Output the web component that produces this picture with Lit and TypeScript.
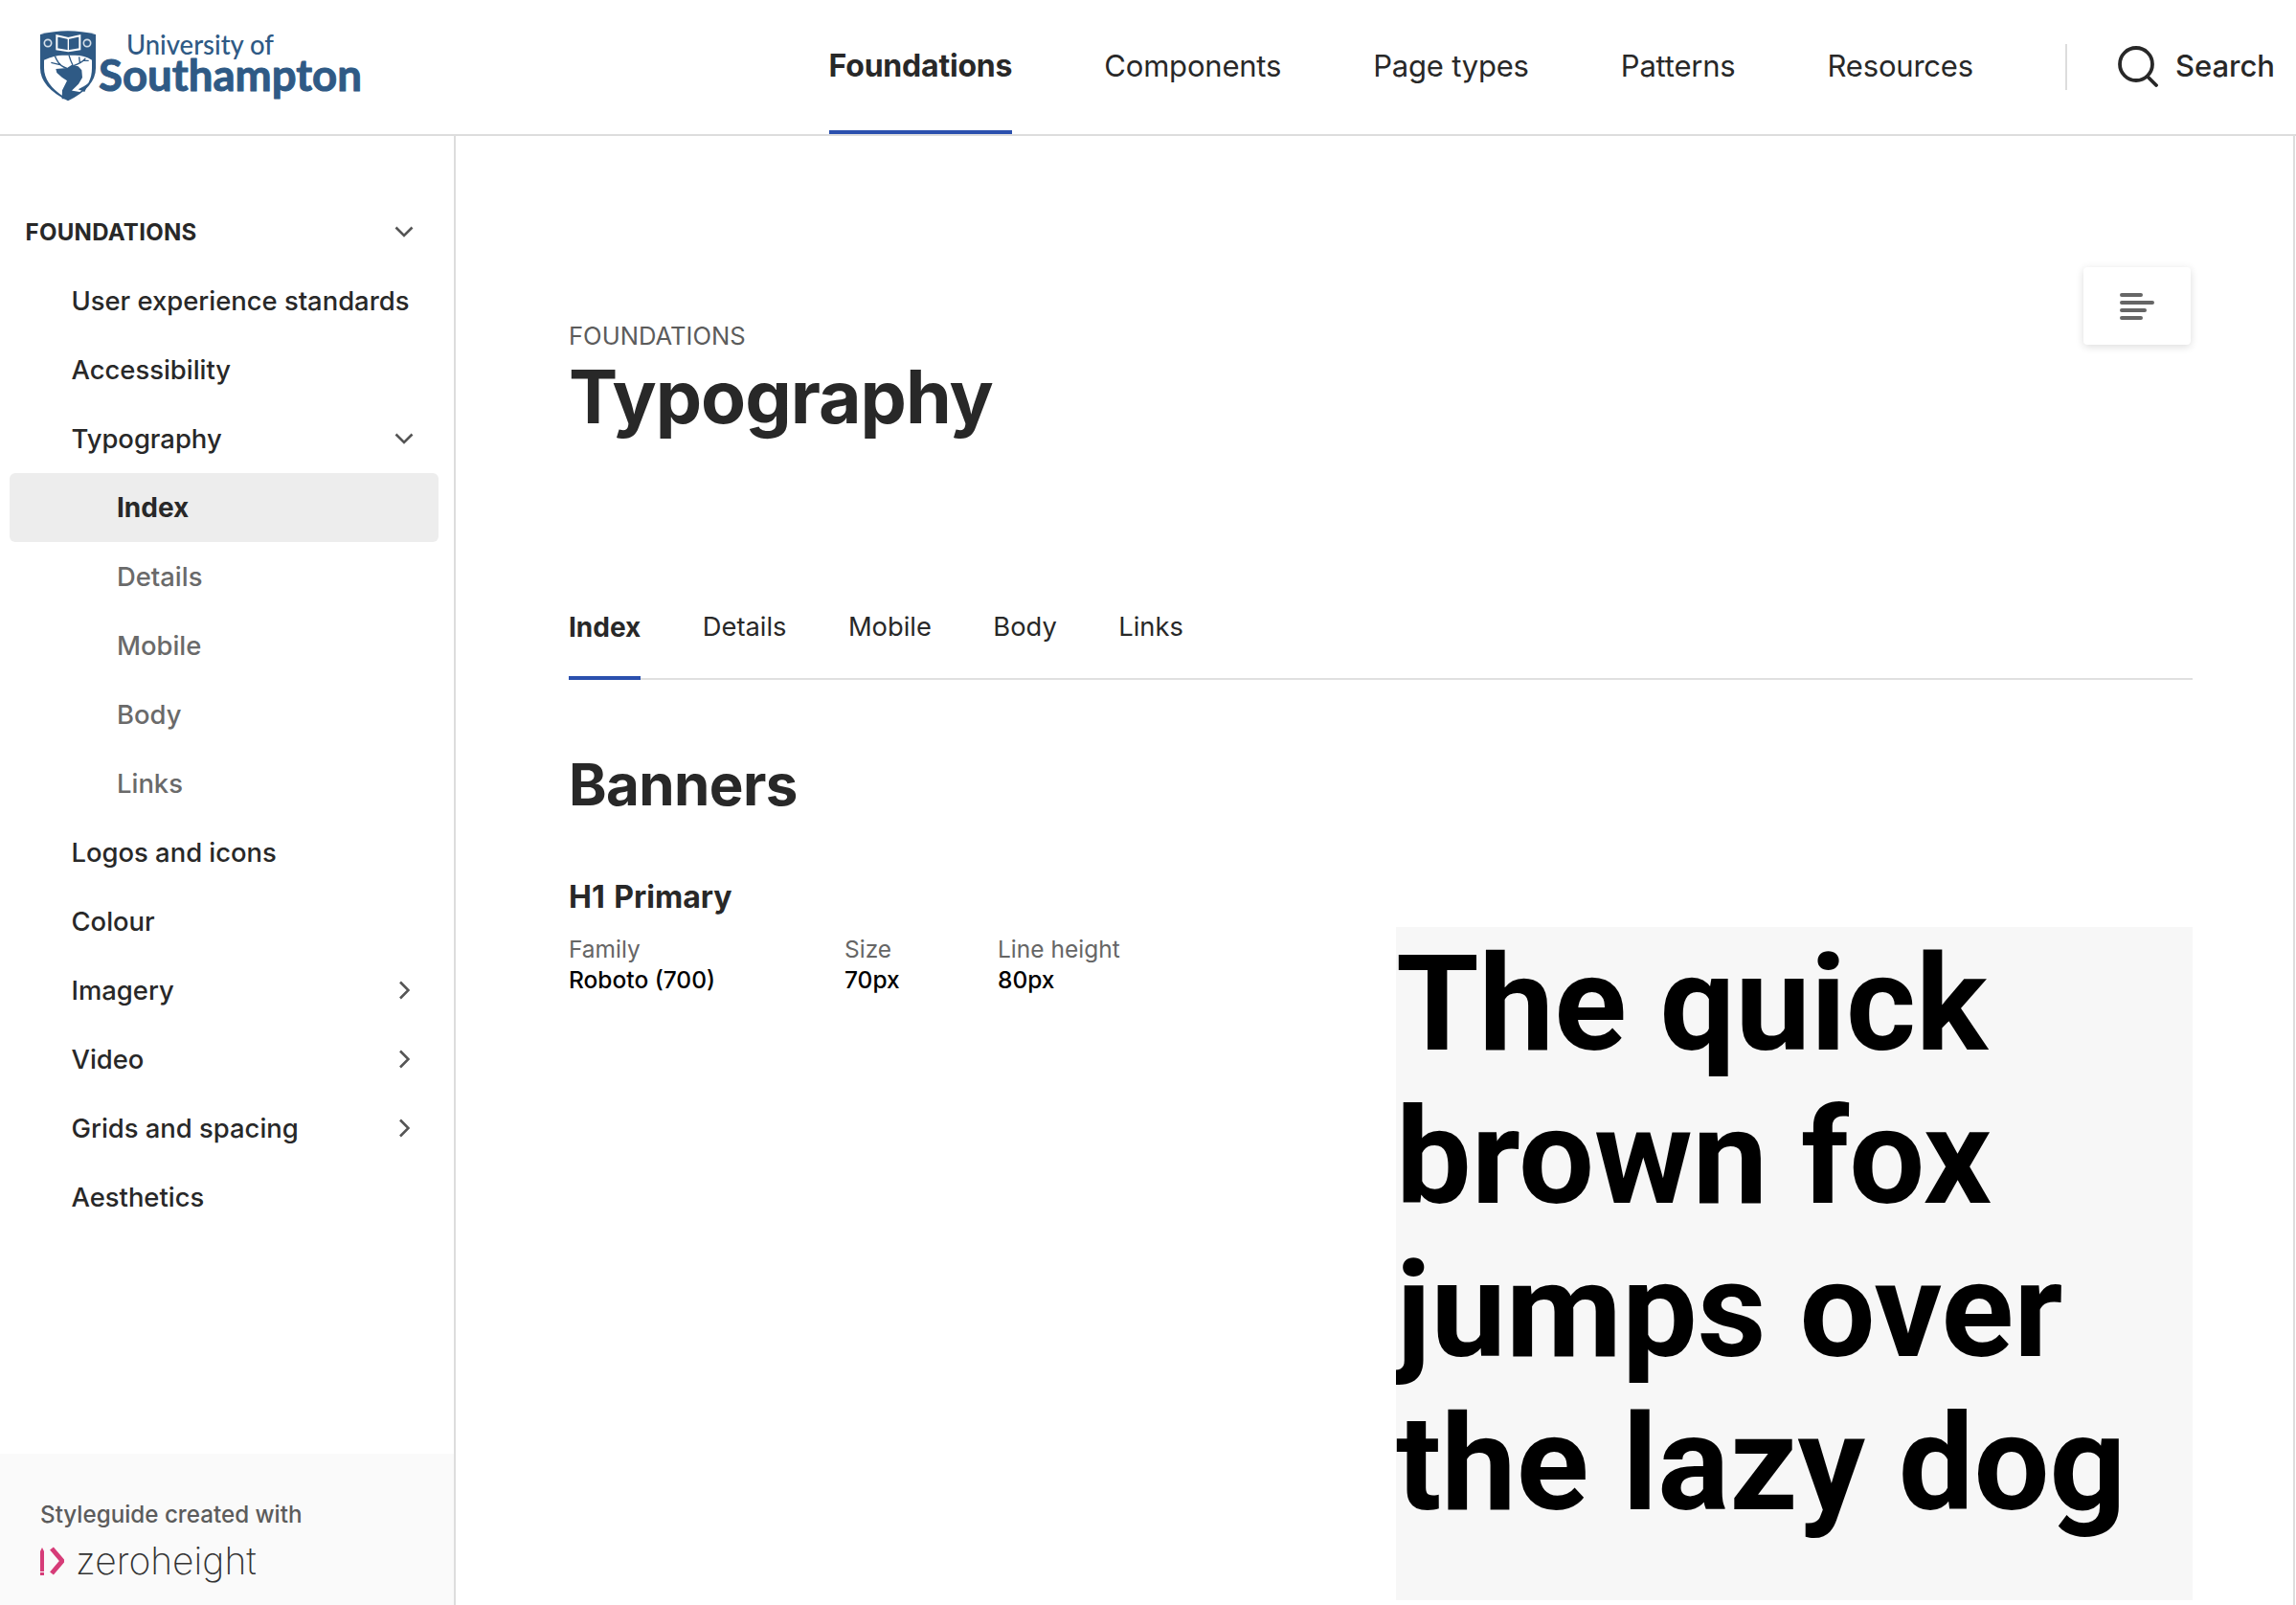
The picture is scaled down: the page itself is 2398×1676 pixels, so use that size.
import { LitElement, html, css, svg } from 'lit';
import { customElement } from 'lit/decorators.js';

const chevronDown = html`<svg class="chev" width="20" height="12" viewBox="0 0 20 12"><path d="M1.5 1.5 10 10l8.5-8.5" fill="none" stroke="#555" stroke-width="2.6"/></svg>`;
const chevronRight = html`<svg class="chev right" width="12" height="20" viewBox="0 0 12 20"><path d="M2 1.5 10.5 10 2 18.5" fill="none" stroke="#555" stroke-width="2.6"/></svg>`;

const shield = svg`
  <path d="M66 60Q152 38 240 60V165Q240 225 153 268Q66 225 66 165Z" fill="#2f5a85"/>
  <path d="M78 140Q112 125 135 125L175 125Q205 125 228 140V165Q228 215 190 240L158 235Q150 250 140 255Q78 215 78 165Z" fill="#fff"/>
  <path d="M118 64l36 8 36-8v42l-36 6-36-6z" fill="none" stroke="#fff" stroke-width="6"/>
  <path d="M154 72v38" stroke="#fff" stroke-width="4"/>
  <circle cx="90" cy="87" r="11" fill="none" stroke="#d5dfe9" stroke-width="5"/>
  <circle cx="213" cy="87" r="11" fill="none" stroke="#d5dfe9" stroke-width="5"/>
  <path d="M115 168L150 165L165 155L185 160L196 172L198 195L186 215L166 235L158 262L134 262L135 235L150 205L135 195L118 180Z" fill="#2f5a85"/>
  <path d="M150 166Q128 160 118 140M128 155L100 148M118 140L112 128M168 156Q160 140 156 125M170 158Q195 150 208 135M190 148L188 130M200 142L218 142" fill="none" stroke="#2f5a85" stroke-width="4"/>
  <path d="M185 232Q205 222 218 212L205 240Z" fill="#2f5a85"/>
`;

@customElement('app-root')
export class AppRoot extends LitElement {
  static styles = css`
    :host {
      display: flex;
      flex-direction: column;
      height: 100vh;
      overflow: hidden;
      background: #fff;
      font-family: Inter, 'Noto Sans', sans-serif;
      color: #282828;
    }

    header {
      display: flex;
      align-items: center;
      flex: none;
      height: 140px;
      border-bottom: 2px solid #ddd;
      padding: 0 22px 0 42px;
    }
    .logo { display: flex; flex: none; }
    .top-nav { display: flex; height: 100%; margin-left: auto; gap: 96px; }
    .top-nav a {
      display: flex;
      align-items: center;
      height: 134px;
      padding-top: 2px;
      border-bottom: 4px solid transparent;
      font-size: 31px;
      line-height: 40px;
      letter-spacing: -0.2px;
      white-space: nowrap;
    }
    .top-nav a.on { font-size: 32px; font-weight: 700; border-bottom-color: #2b50ae; }
    .divider { width: 2px; height: 48px; background: #ddd; margin: 0 53px 0 96px; }
    .search { display: flex; align-items: center; gap: 18px; font-size: 31px; font-weight: 500; line-height: 40px; padding-bottom: 2px; }

    .body { display: flex; flex: 1; min-height: 0; }

    aside {
      display: flex;
      flex-direction: column;
      flex: none;
      width: 474px;
      border-right: 2px solid #ddd;
    }
    .side-nav { flex: 1; padding-top: 64px; }
    .row {
      display: flex;
      align-items: center;
      justify-content: space-between;
      height: 72px;
      margin: 0 16px 0 10px;
      padding: 0 26px 0 64.5px;
      font-size: 27.4px;
      font-weight: 500;
      white-space: nowrap;
      border-radius: 6px;
    }
    .row.head { padding-left: 16.5px; font-size: 24px; font-weight: 700; letter-spacing: 0.3px; }
    .row.sub { padding-left: 112px; color: #6a6a6a; }
    .row.on { background: #ededed; color: #282828; font-size: 28px; font-weight: 700; }
    .chev { flex: none; }
    .chev.right { margin-right: 4px; }

    .made {
      height: 158px;
      flex: none;
      box-sizing: border-box;
      padding: 46px 0 0 42px;
      background: #fafafa;
    }
    .made p { margin: 0; font-size: 24.2px; line-height: 36px; font-weight: 500; color: #5c5c5c; }
    .zh { display: flex; align-items: center; gap: 12px; margin-top: 7px; height: 46px; }
    .zh span { font-weight: 200; font-size: 39px; line-height: 46px; color: #333; }

    main {
      flex: 1;
      min-width: 0;
      padding: 137px 105px 0 118px;
      margin-right: 1px;
      border-right: 2px solid #ddd;
      overflow: hidden;
    }
    .page-head { display: flex; justify-content: space-between; align-items: flex-start; }
    .page-title { padding-top: 56px; }
    .eyebrow { font-size: 25.6px; line-height: 32px; color: #5c5c5c; }
    h1 { margin: 3px 0 0; font-size: 76.8px; line-height: 90px; font-weight: 700; letter-spacing: -1px; }
    .toc {
      display: flex;
      align-items: center;
      justify-content: center;
      width: 112px;
      height: 81px;
      margin-right: 2px;
      border-radius: 4px;
      background: #fff;
      box-shadow: 0 2px 8px rgba(0, 0, 0, 0.14);
    }

    .tabs { display: flex; gap: 64.5px; margin-top: 174px; border-bottom: 2px solid #e0e0e0; }
    .tabs a { margin-bottom: -2px; padding: 1px 0 31px; border-bottom: 4px solid transparent; font-size: 27.3px; line-height: 40px; }
    .tabs a.on { font-size: 28px; font-weight: 700; border-bottom-color: #2b50ae; }

    h2 { margin: 71px 0 0; font-size: 60px; line-height: 76px; font-weight: 700; letter-spacing: -0.6px; }
    h3 { margin: 60px 0 0; font-size: 32px; line-height: 40px; font-weight: 700; word-spacing: 2px; }

    .spec { display: flex; margin-top: 11px; }
    .meta { display: flex; flex: none; width: 864px; padding-top: 7px; }
    .meta div { font-size: 24.5px; font-weight: 500; line-height: 32px; color: #000; }
    .meta div:nth-child(1) { width: 288px; }
    .meta div:nth-child(2) { width: 160px; }
    .meta b { display: block; font-weight: 400; color: #666; }
    .sample {
      flex: 1;
      padding-bottom: 63px;
      overflow: hidden;
      background: #f7f7f7;
      color: #000;
      font-family: Roboto, sans-serif;
      font-weight: 700;
      font-size: 140px;
      line-height: 160px;
    }
  `;

  render() {
    return html`
      <header>
        <div class="logo">
          <svg width="340" height="90" viewBox="42 23 340 90">
            <svg x="42" y="30" width="60" height="74" viewBox="66 48 180 222">${shield}</svg>
            <text x="132" y="55" font-family="Lato, sans-serif" font-size="29" font-weight="500" fill="#2f5a85" textLength="154" lengthAdjust="spacingAndGlyphs">University of</text>
            <text x="103" y="93" font-family="Lato, sans-serif" font-size="46" font-weight="700" fill="#2f5a85" stroke="#2f5a85" stroke-width="1" stroke-linejoin="round" textLength="275" lengthAdjust="spacingAndGlyphs">Southampton</text>
          </svg>
        </div>
        <nav class="top-nav">
          <a class="on">Foundations</a>
          <a>Components</a>
          <a>Page types</a>
          <a>Patterns</a>
          <a>Resources</a>
        </nav>
        <div class="divider"></div>
        <div class="search">
          <svg width="42" height="44" viewBox="0 0 42 44"><circle cx="19" cy="20" r="17" fill="none" stroke="#282828" stroke-width="3.8"/><path d="M31 33l9 9" stroke="#282828" stroke-width="3.8" stroke-linecap="round"/></svg>
          Search
        </div>
      </header>
      <div class="body">
        <aside>
          <nav class="side-nav">
            <div class="row head">FOUNDATIONS ${chevronDown}</div>
            <div class="row">User experience standards</div>
            <div class="row">Accessibility</div>
            <div class="row">Typography ${chevronDown}</div>
            <div class="row sub on">Index</div>
            <div class="row sub">Details</div>
            <div class="row sub">Mobile</div>
            <div class="row sub">Body</div>
            <div class="row sub">Links</div>
            <div class="row">Logos and icons</div>
            <div class="row">Colour</div>
            <div class="row">Imagery ${chevronRight}</div>
            <div class="row">Video ${chevronRight}</div>
            <div class="row">Grids and spacing ${chevronRight}</div>
            <div class="row">Aesthetics</div>
          </nav>
          <div class="made">
            <p>Styleguide created with</p>
            <div class="zh">
              <svg width="25" height="30" viewBox="0 0 25 30">
                <path d="M0 5l2-4 2 4v21H0z" fill="#d63c78"/><path d="M0 27h4v3H0z" fill="#d63c78"/>
                <path d="M12 2l11 13-11 13" fill="none" stroke="#d63c78" stroke-width="5"/>
              </svg>
              <span>zeroheight</span>
            </div>
          </div>
        </aside>
        <main>
          <div class="page-head">
            <div class="page-title">
              <div class="eyebrow">FOUNDATIONS</div>
              <h1>Typography</h1>
            </div>
            <div class="toc">
              <svg width="36" height="28" viewBox="0 0 36 28">
                <g stroke="#666" stroke-width="4" stroke-linecap="round">
                  <path d="M2 2h20M2 10h32M2 18h24M2 26h20"/>
                </g>
              </svg>
            </div>
          </div>
          <nav class="tabs">
            <a class="on">Index</a>
            <a>Details</a>
            <a>Mobile</a>
            <a>Body</a>
            <a>Links</a>
          </nav>
          <h2>Banners</h2>
          <h3>H1 Primary</h3>
          <div class="spec">
            <div class="meta">
              <div><b>Family</b>Roboto (700)</div>
              <div><b>Size</b>70px</div>
              <div><b>Line height</b>80px</div>
            </div>
            <div class="sample">The quick brown fox jumps over the lazy dog</div>
          </div>
        </main>
      </div>
    `;
  }
}
